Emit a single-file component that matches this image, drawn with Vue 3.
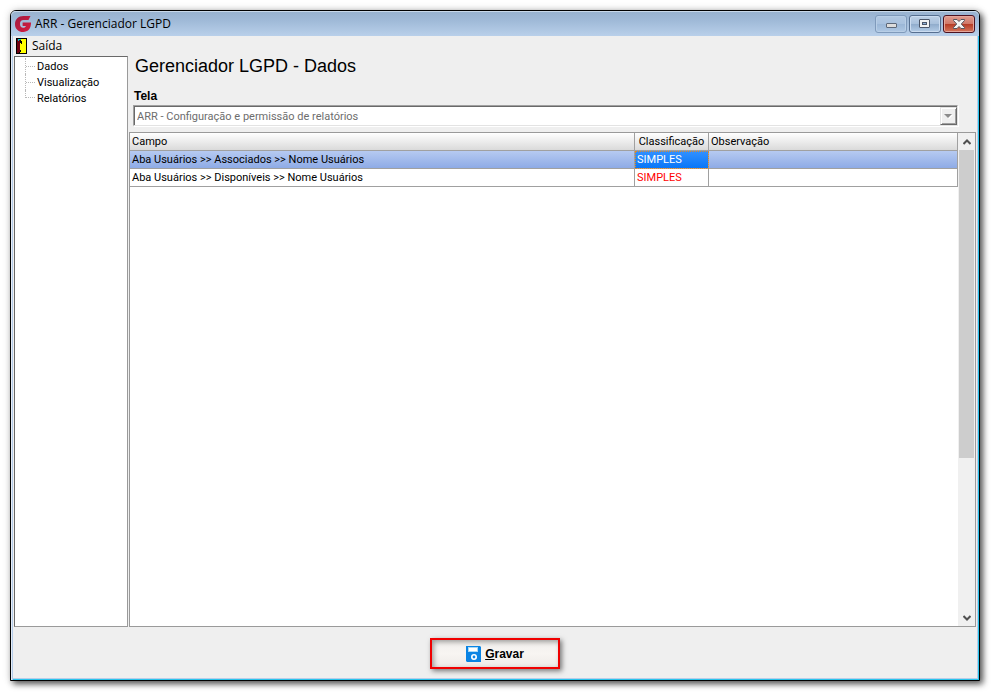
<template>
  <div class="desktop">
    <div class="window">
      <header class="titlebar">
        <svg class="logo" viewBox="0 0 16 16" aria-hidden="true">
          <defs>
            <linearGradient id="logoFill" x1="0" y1="0" x2="1" y2="1">
              <stop offset="0" stop-color="#a01c40" />
              <stop offset="1" stop-color="#d81c40" />
            </linearGradient>
          </defs>
          <path
            fill="url(#logoFill)"
            d="M15.5 0 L13.5 4 H8.5 C6.2 4 5 5.6 5 8 C5 10.4 6.2 11.8 8.2 11.8 C9.6 11.8 10.6 11.1 10.9 10 H7.6 V6.5 H16 C16.2 12.4 13.2 16 8.2 16 C3.4 16 0 12.8 0 8.2 C0 3.2 3.4 0 8.4 0 Z"
          />
        </svg>
        <span class="title">ARR - Gerenciador LGPD</span>
        <div class="window-buttons">
          <button type="button" class="win-btn minimize" aria-label="Minimizar">
            <svg width="11" height="5" viewBox="0 0 11 5">
              <rect x="0.5" y="0.5" width="10" height="4" rx="0.5" fill="#dcdcdc" stroke="#5d6878" />
            </svg>
          </button>
          <button type="button" class="win-btn maximize" aria-label="Maximizar">
            <svg width="12" height="10" viewBox="0 0 12 10">
              <rect x="0.5" y="0.5" width="10" height="8" rx="0.5" fill="#f2f2f2" stroke="#4c5668" />
              <rect x="3.5" y="3.5" width="4" height="2" fill="#8fb0d6" stroke="#4c5668" />
            </svg>
          </button>
          <button type="button" class="win-btn close" aria-label="Fechar">
            <svg width="12" height="10" viewBox="0 0 12 10">
              <path
                d="M0.5 0.5 H4 L6 2.5 L8 0.5 H11.5 V1.5 L8.3 5 L11.5 8.5 V9.5 H8 L6 7.5 L4 9.5 H0.5 V8.5 L3.7 5 L0.5 1.5 Z"
                fill="#f4f4f4"
                stroke="#55565f"
              />
            </svg>
          </button>
        </div>
      </header>

      <nav class="menubar">
        <button type="button" class="menu-item">
          <svg width="11" height="16" viewBox="0 0 11 16" shape-rendering="crispEdges" aria-hidden="true">
            <rect width="11" height="16" fill="#000" />
            <rect x="4" y="1" width="6" height="14" fill="#ff0" />
            <path d="M1 1 H3 V2 H4 V14 H3 V15 H1 Z" fill="#700010" />
            <path d="M2 1 H5 V2 H3 V3 H2 Z" fill="#0cc" />
            <path d="M4 2 H5 V5 H4 Z M5 3 H6 V6 H5 Z M4 12 H5 V14 H4 Z" fill="#000" />
          </svg>
          <span>Saída</span>
        </button>
      </nav>

      <div class="content">
        <aside class="sidebar">
          <ul class="tree">
            <li v-for="item in sections" :key="item">
              <a href="#">{{ item }}</a>
            </li>
          </ul>
        </aside>

        <main class="main">
          <h1>Gerenciador LGPD - Dados</h1>
          <label class="field-label" for="tela">Tela</label>
          <div class="combo">
            <select id="tela" disabled>
              <option>ARR - Configuração e permissão de relatórios</option>
            </select>
            <span class="combo-arrow">
              <svg width="9" height="5" viewBox="0 0 9 5">
                <path d="M1 1 H9 L5 5 Z" fill="#fff" />
                <path d="M0 0 H8 L4 4 Z" fill="#8c8c8c" />
              </svg>
            </span>
          </div>

          <div class="grid">
            <div class="grid-view">
              <table>
                <colgroup>
                  <col />
                  <col class="col-class" />
                  <col class="col-obs" />
                </colgroup>
                <thead>
                  <tr>
                    <th>Campo</th>
                    <th class="center">Classificação</th>
                    <th>Observação</th>
                  </tr>
                </thead>
                <tbody>
                  <tr
                    v-for="(row, index) in rows"
                    :key="row.campo"
                    :class="{ selected: index === selectedRow }"
                    @click="selectedRow = index"
                  >
                    <td>{{ row.campo }}</td>
                    <td class="classification">{{ row.classificacao }}</td>
                    <td>{{ row.observacao }}</td>
                  </tr>
                </tbody>
              </table>
            </div>
            <div class="scrollbar">
              <button type="button" class="scroll-btn" aria-label="Rolar para cima">
                <svg width="8" height="6" viewBox="0 0 8 6">
                  <path d="M0.5 5 L4 1.5 L7.5 5" fill="none" stroke="#505050" stroke-width="2" />
                </svg>
              </button>
              <div class="scroll-track">
                <div class="scroll-thumb"></div>
              </div>
              <button type="button" class="scroll-btn" aria-label="Rolar para baixo">
                <svg width="8" height="6" viewBox="0 0 8 6">
                  <path d="M0.5 1 L4 4.5 L7.5 1" fill="none" stroke="#505050" stroke-width="2" />
                </svg>
              </button>
            </div>
          </div>
        </main>
      </div>

      <footer class="footer">
        <button type="button" class="save">
          <svg width="15" height="16" viewBox="0 0 15 16" aria-hidden="true">
            <path d="M0 0 H14 L15 1 V16 H1 L0 15 Z" fill="#0a84e4" />
            <path d="M2 1 H12 V6 H2 Z" fill="#a9d8f6" />
            <path d="M3 2 H11 V5 H3 Z" fill="#fff" />
            <circle cx="8" cy="11" r="2.2" fill="none" stroke="#fff" stroke-width="1.6" />
          </svg>
          <span><u>G</u>ravar</span>
        </button>
      </footer>
    </div>
  </div>
</template>

<script setup>
import { ref } from 'vue'

const sections = ['Dados', 'Visualização', 'Relatórios']

const rows = [
  { campo: 'Aba Usuários >> Associados >> Nome Usuários', classificacao: 'SIMPLES', observacao: '' },
  { campo: 'Aba Usuários >> Disponíveis >> Nome Usuários', classificacao: 'SIMPLES', observacao: '' },
]

const selectedRow = ref(0)
</script>

<style>
body {
  margin: 0;
  background: #fff;
}
</style>

<style scoped>
.desktop {
  box-sizing: border-box;
  display: flex;
  min-height: 100vh;
  padding: 10px 11px 11px 10px;
  font-family: Roboto, 'Liberation Sans', sans-serif;
  font-size: 11px;
  color: #000;
}

button {
  box-sizing: border-box;
  margin: 0;
  padding: 0;
  font: inherit;
  color: inherit;
}

.window {
  flex: 1;
  min-width: 0;
  display: flex;
  flex-direction: column;
  border: 1px solid #000;
  border-radius: 6px 6px 0 0;
  background: #efefef;
  box-shadow:
    inset 1px 0 0 #e4edf8,
    inset 2px 0 0 #b4cbe8,
    inset -1px -1px 0 #28c4ec,
    inset -2px -2px 0 #b9cde8,
    3px 3px 6px rgba(0, 0, 0, 0.65),
    0 0 9px rgba(0, 0, 0, 0.15);
}

.titlebar {
  box-sizing: border-box;
  display: flex;
  align-items: center;
  height: 25px;
  padding: 1px 4px 0;
  border-radius: 5px 5px 0 0;
  background: linear-gradient(#98b2cf, #a0bad8 40%, #b9d0ea);
  box-shadow: inset 0 1px 0 #c9d9ea;
}

.logo {
  width: 16px;
  height: 16px;
}

.title {
  flex: 1;
  margin-left: 4px;
  font-family: 'Open Sans', 'Noto Sans', sans-serif;
  font-size: 12px;
  line-height: 16px;
}

.window-buttons {
  display: flex;
  gap: 2px;
}

.win-btn {
  display: flex;
  align-items: center;
  justify-content: center;
  width: 32px;
  height: 18px;
  border: 1px solid #566f90;
  border-radius: 3px;
  background: linear-gradient(#bdd0e6 0%, #a9c1dc 48%, #8fabcb 50%, #b3cce6 100%);
  box-shadow: inset 0 0 0 1px #cbdcf0;
}

.win-btn.minimize {
  padding-top: 3px;
  border-color: #7f9abb;
  background: linear-gradient(#b2c8e1 0%, #a9c2df 48%, #9ab6d6 50%, #afc8e4 100%);
  box-shadow: inset 0 0 0 1px #b8cee6;
}

.win-btn.close {
  border-color: #4c1220;
  background: linear-gradient(#e09c90 0%, #d07868 48%, #b53a24 50%, #d4765c 100%);
  box-shadow: inset 0 0 0 1px #e4a69b;
}

.menubar {
  display: flex;
  height: 20px;
  padding: 0 5px;
  font-family: 'Open Sans', 'Noto Sans', sans-serif;
  font-size: 12px;
  line-height: 16px;
}

.menu-item {
  display: flex;
  align-items: center;
  gap: 5px;
  border: 0;
  background: none;
}

.content {
  flex: 1;
  display: flex;
  gap: 1px;
  padding: 0 3px;
}

.sidebar {
  box-sizing: border-box;
  flex: 0 0 114px;
  border: 1px solid #9a9a9a;
  border-top-color: #696969;
  border-left-color: #696969;
  background: #fff;
}

.tree {
  margin: 0;
  padding: 1px 0 0 10px;
  list-style: none;
}

.tree li {
  display: flex;
  align-items: center;
  height: 16px;
  background: linear-gradient(90deg, #b8b8b8 50%, transparent 50%) 0 8px / 2px 1px repeat-x;
  border-left: 1px dotted #b8b8b8;
}

.tree li:last-child {
  height: 8px;
  background-position: 0 100%;
}

.tree a {
  flex: 1;
  margin-left: 9px;
  padding-left: 2px;
  background: #fff;
  color: #000;
  line-height: 17px;
  text-decoration: none;
}

.tree li:last-child a {
  align-self: flex-start;
}

.main {
  flex: 1;
  min-width: 0;
  display: flex;
  flex-direction: column;
}

h1 {
  margin: 0 0 0 6px;
  font-family: 'Liberation Sans', Arial, sans-serif;
  font-size: 18px;
  font-weight: 400;
  line-height: 20px;
}

.field-label {
  margin: 12px 0 0 5px;
  font-family: 'Liberation Sans', Arial, sans-serif;
  font-size: 12px;
  font-weight: 700;
  line-height: 16px;
}

.combo {
  display: flex;
  box-sizing: border-box;
  height: 21px;
  margin: 1px 18px 6px 4px;
  border: 1px solid #a0a0a0;
  border-right-color: #e3e3e3;
  border-bottom-color: #e3e3e3;
  background: #fff;
  box-shadow: inset 1px 1px 0 #696969, 1px 1px 0 #fff;
}

.combo select {
  appearance: none;
  flex: 1;
  min-width: 0;
  margin: 1px 0 0 1px;
  padding: 0 2px;
  border: 0;
  background: transparent;
  color: #6d6d6d;
  opacity: 1;
  font: inherit;
}

.combo-arrow {
  display: flex;
  align-items: center;
  justify-content: center;
  box-sizing: border-box;
  width: 17px;
  margin-top: 1px;
  border: 1px solid #e3e3e3;
  border-right-color: #696969;
  border-bottom-color: #696969;
  background: #efefef;
  box-shadow: inset 1px 1px 0 #fff, inset -1px -1px 0 #a0a0a0;
}

.grid {
  flex: 1;
  display: flex;
  border: 1px solid #9a9a9a;
  background: #fff;
}

.grid-view {
  flex: 1;
  min-width: 0;
}

table {
  width: 100%;
  table-layout: fixed;
  border-collapse: separate;
  border-spacing: 0;
}

.col-class {
  width: 74px;
}

.col-obs {
  width: 249px;
}

th,
td {
  box-sizing: border-box;
  height: 18px;
  padding: 0 2px;
  border-right: 1px solid #a0a0a0;
  border-bottom: 1px solid #a0a0a0;
  line-height: 17px;
  text-align: left;
  white-space: nowrap;
}

th {
  background: linear-gradient(#fff, #dadada);
  font-weight: 400;
}

th.center {
  text-align: center;
}

td.classification {
  color: #f00;
}

.selected td {
  background: linear-gradient(#b6caf1, #8eabe6);
}

.selected td.classification {
  background: linear-gradient(#3391ff, #0876f8);
  color: #fff;
  outline: 1px dotted #e08a28;
  outline-offset: -1px;
}

.scrollbar {
  display: flex;
  flex-direction: column;
  width: 17px;
  background: #f0f0f0;
}

.scroll-btn {
  display: flex;
  align-items: center;
  justify-content: center;
  height: 17px;
  border: 0;
  background: #f0f0f0;
}

.scroll-track {
  flex: 1;
  padding: 0 1px;
}

.scroll-thumb {
  height: 67%;
  background: #cdcdcd;
}

.footer {
  display: flex;
  justify-content: center;
  padding: 11px 0;
}

.save {
  display: flex;
  align-items: center;
  justify-content: center;
  gap: 4px;
  width: 130px;
  height: 31px;
  border: 2px solid #f00000;
  background: linear-gradient(#f1efed, #f8f5f2 50%, #efebe8);
  box-shadow:
    inset 2px 2px 5px rgba(0, 0, 0, 0.35),
    2px 2px 5px rgba(0, 0, 0, 0.5);
  font-family: 'Liberation Sans', Arial, sans-serif;
  font-size: 12px;
  font-weight: 700;
}
</style>
